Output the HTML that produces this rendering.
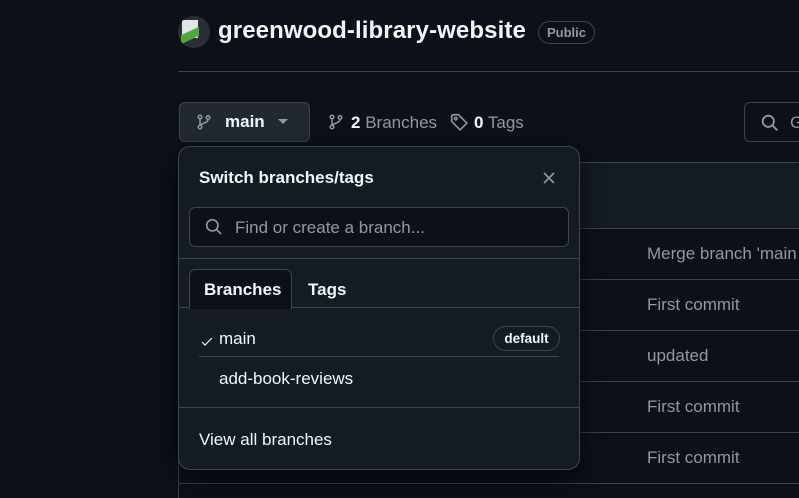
<!DOCTYPE html>
<html style="width:799px;height:498px;overflow:hidden"><head><meta charset="utf-8"><style>
*{box-sizing:border-box;margin:0;padding:0}
body{width:799px;height:498px;overflow:hidden;background:#0d1117;font-family:"Liberation Sans",sans-serif;color:#f0f6fc;position:relative}
.abs{position:absolute}
.muted{color:#9198a1}
</style></head><body>
<div class="abs" style="left:178px;top:16px;width:32px;height:32px;border-radius:50%;background:#2a2f36;overflow:hidden">
 <div class="abs" style="left:4px;top:4px;width:16px;height:18px;background:#dfe5ea"></div>
 <div class="abs" style="left:3px;top:15px;width:18px;height:9px;background:#4caa3a;transform:skewY(-25deg)"></div>
</div>
<div class="abs" style="left:218px;top:17px;font-size:24px;font-weight:bold;letter-spacing:0.1px">greenwood-library-website</div>
<div class="abs" style="left:538px;top:21px;height:23px;padding:0 8px;border:1px solid #3d444d;border-radius:12px;font-size:13px;line-height:21px;color:#9198a1;font-weight:bold">Public</div>
<div class="abs" style="left:178px;top:71px;width:621px;height:1px;background:#3d444d"></div>
<div class="abs" style="left:179px;top:102px;width:131px;height:40px;border:1px solid #3d444d;border-radius:6px;background:#212830"></div>
<svg class="abs" style="left:196px;top:114px" width="16" height="16" viewBox="0 0 16 16" fill="none" stroke="#9198a1" stroke-width="1.5"><circle cx="4" cy="3" r="1.8"/><circle cx="4" cy="13" r="1.8"/><circle cx="12" cy="3.5" r="1.8"/><path d="M4 5v6M12 5.5c0 3-4 3-7.5 5.5"/></svg>
<div class="abs" style="left:225px;top:112px;font-size:17px;font-weight:bold">main</div>
<svg class="abs" style="left:278px;top:119px" width="10" height="6"><path d="M0 0h10L5 5z" fill="#9198a1"/></svg>
<svg class="abs" style="left:328px;top:114px" width="16" height="16" viewBox="0 0 16 16" fill="none" stroke="#9198a1" stroke-width="1.5"><circle cx="4" cy="3" r="1.8"/><circle cx="4" cy="13" r="1.8"/><circle cx="12" cy="3.5" r="1.8"/><path d="M4 5v6M12 5.5c0 3-4 3-7.5 5.5"/></svg>
<div class="abs" style="left:351px;top:113px;font-size:17px"><b>2</b> <span class="muted">Branches</span></div>
<svg class="abs" style="left:450px;top:113px" width="18" height="18" viewBox="0 0 16 16" fill="none" stroke="#9198a1" stroke-width="1.4"><path d="M1.5 2.5v5l7.5 7.5 6-6-7.5-7.5h-5z"/><circle cx="5" cy="5" r="1.1"/></svg>
<div class="abs" style="left:474px;top:113px;font-size:17px"><b>0</b> <span class="muted">Tags</span></div>
<div class="abs" style="left:744px;top:102px;width:80px;height:40px;border:1px solid #3d444d;border-radius:6px"></div>
<svg class="abs" style="left:761px;top:114px" width="18" height="18" viewBox="0 0 16 16" fill="none" stroke="#9198a1" stroke-width="1.6"><circle cx="6.5" cy="6.5" r="5"/><path d="M10.5 10.5l4 4"/></svg>
<div class="abs muted" style="left:790px;top:113px;font-size:17px">G</div>
<div class="abs" style="left:178px;top:162px;width:640px;height:336px;border:1px solid #3d444d;border-bottom:none;border-radius:6px 6px 0 0"></div>
<div class="abs" style="left:179px;top:163px;width:620px;height:65px;background:#151b23;border-radius:6px 6px 0 0"></div>
<div class="abs" style="left:178px;top:228px;width:621px;height:1px;background:#3d444d"></div>
<div class="abs" style="left:178px;top:279px;width:621px;height:1px;background:#3d444d"></div>
<div class="abs" style="left:178px;top:330px;width:621px;height:1px;background:#3d444d"></div>
<div class="abs" style="left:178px;top:381px;width:621px;height:1px;background:#3d444d"></div>
<div class="abs" style="left:178px;top:432px;width:621px;height:1px;background:#3d444d"></div>
<div class="abs" style="left:178px;top:483px;width:621px;height:1px;background:#3d444d"></div>
<div class="abs muted" style="left:647px;top:244px;font-size:17px;white-space:nowrap">Merge branch 'main</div>
<div class="abs muted" style="left:647px;top:295px;font-size:17px">First commit</div>
<div class="abs muted" style="left:647px;top:346px;font-size:17px">updated</div>
<div class="abs muted" style="left:647px;top:397px;font-size:17px">First commit</div>
<div class="abs muted" style="left:647px;top:448px;font-size:17px">First commit</div>
<div class="abs" style="left:178px;top:146px;width:402px;height:324px;background:#151b23;border:1px solid #3d444d;border-radius:12px;box-shadow:0 8px 24px rgba(1,4,9,0.8);overflow:hidden">
 <div class="abs" style="left:20px;top:21px;font-size:17px;font-weight:bold">Switch branches/tags</div>
 <svg class="abs" style="left:363px;top:24px" width="14" height="14" viewBox="0 0 14 14" stroke="#9198a1" stroke-width="1.6"><path d="M2 2l10 10M12 2L2 12"/></svg>
 <div class="abs" style="left:10px;top:60px;width:380px;height:40px;background:#0d1117;border:1px solid #3d444d;border-radius:6px"></div>
 <svg class="abs" style="left:26px;top:71px" width="18" height="18" viewBox="0 0 16 16" fill="none" stroke="#9198a1" stroke-width="1.5"><circle cx="6.5" cy="6.5" r="5"/><path d="M10.3 10.3l4 4"/></svg>
 <div class="abs muted" style="left:56px;top:71px;font-size:17px">Find or create a branch...</div>
 <div class="abs" style="left:0;top:111px;width:402px;height:1px;background:#3d444d"></div>
 <div class="abs" style="left:10px;top:122px;width:103px;height:40px;background:#0d1117;border:1px solid #3d444d;border-bottom:none;border-radius:6px 6px 0 0"></div>
 <div class="abs" style="left:25px;top:133px;font-size:17px;font-weight:bold">Branches</div>
 <div class="abs" style="left:129px;top:133px;font-size:17px;font-weight:bold">Tags</div>
 <div class="abs" style="left:0;top:160px;width:10px;height:1px;background:#3d444d"></div>
 <div class="abs" style="left:113px;top:160px;width:289px;height:1px;background:#3d444d"></div>
 <svg class="abs" style="left:22px;top:190px" width="12" height="10" viewBox="0 0 12 10" fill="none" stroke="#f0f6fc" stroke-width="1.2"><path d="M1 5l3 3 7-7"/></svg>
 <div class="abs" style="left:40px;top:182px;font-size:17px">main</div>
 <div class="abs" style="left:314px;top:179px;width:67px;height:25px;text-align:center;border:1px solid #3d444d;border-radius:13px;font-size:13.5px;font-weight:bold;line-height:23px">default</div>
 <div class="abs" style="left:20px;top:209px;width:360px;height:1px;background:#3d444d"></div>
 <div class="abs" style="left:40px;top:222px;font-size:17px">add-book-reviews</div>
 <div class="abs" style="left:0;top:260px;width:402px;height:1px;background:#3d444d"></div>
 <div class="abs" style="left:20px;top:283px;font-size:17px">View all branches</div>
</div>
</body></html>
